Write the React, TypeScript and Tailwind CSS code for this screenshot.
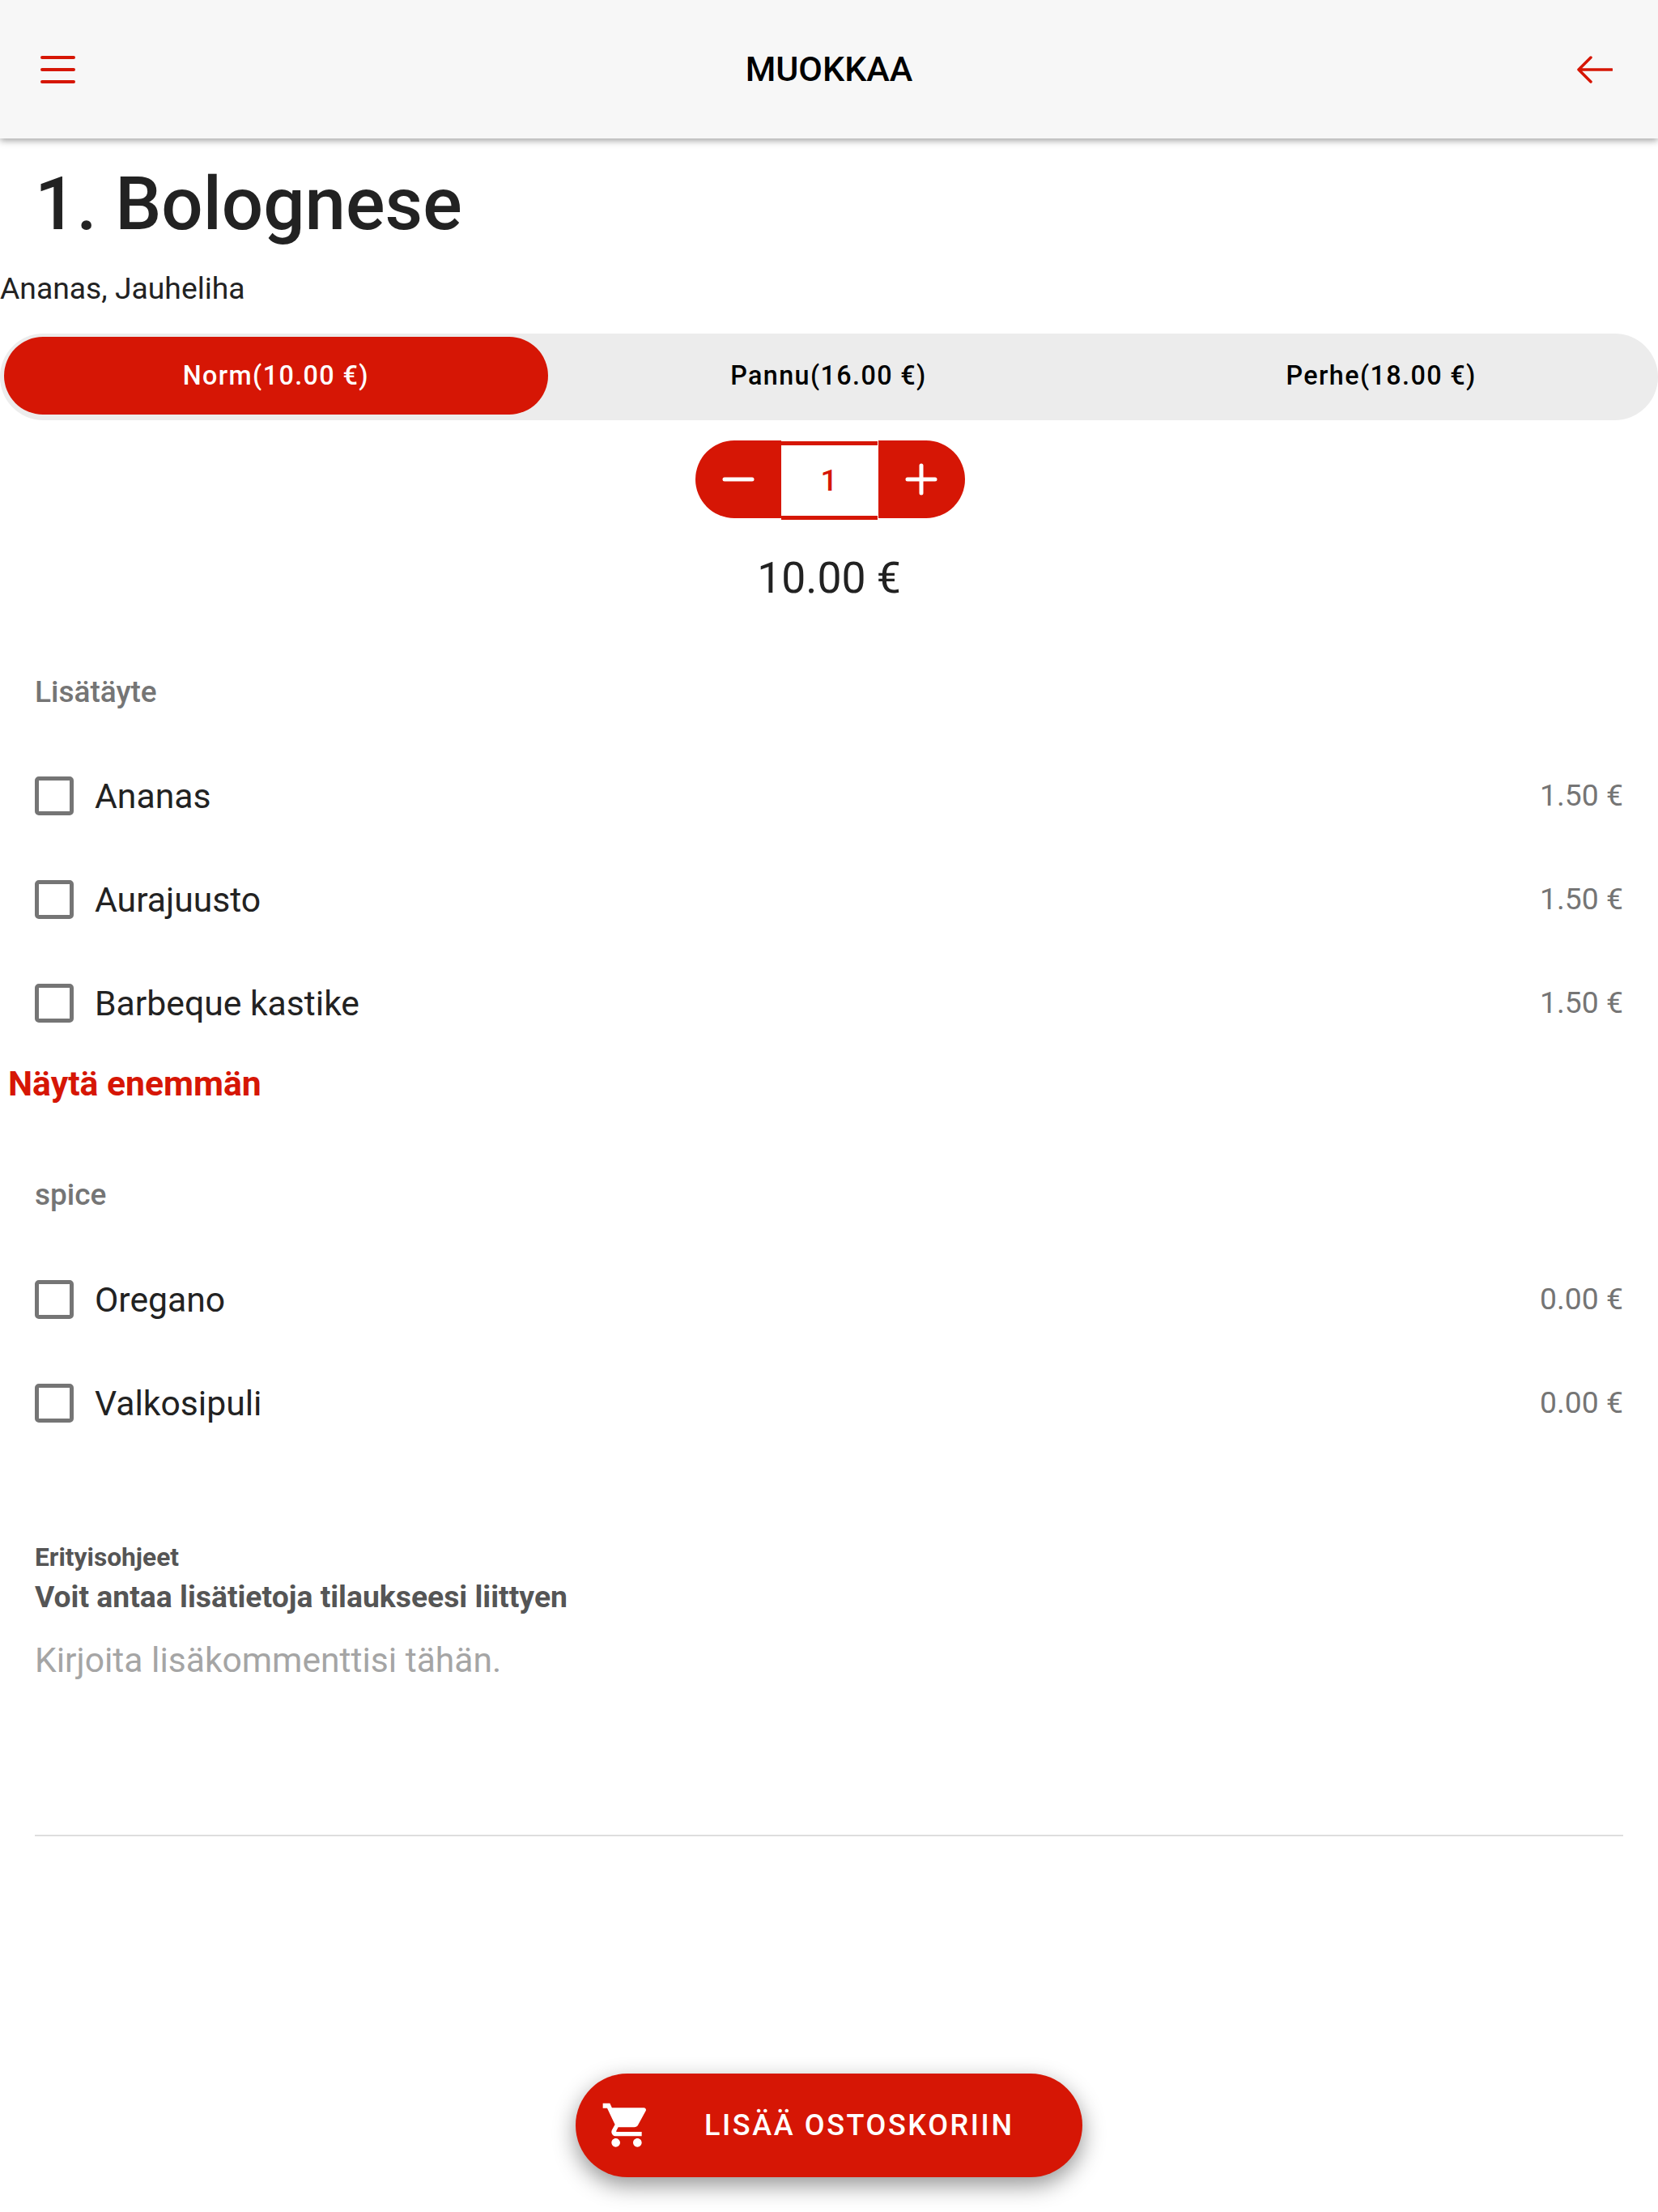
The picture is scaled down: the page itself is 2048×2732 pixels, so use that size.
const SIZES = [
  { label: 'Norm(10.00 €)', active: true },
  { label: 'Pannu(16.00 €)', active: false },
  { label: 'Perhe(18.00 €)', active: false },
]

const TOPPINGS = [
  { name: 'Ananas', price: '1.50 €' },
  { name: 'Aurajuusto', price: '1.50 €' },
  { name: 'Barbeque kastike', price: '1.50 €' },
]

const SPICES = [
  { name: 'Oregano', price: '0.00 €' },
  { name: 'Valkosipuli', price: '0.00 €' },
]

function OptionRow({ name, price }: { name: string; price: string }) {
  return (
    <div className="flex h-[128px] items-center justify-between px-[43px]">
      <div className="flex items-center">
        <span className="h-[48px] w-[48px] rounded-[5px] border-[5px] border-[#757575]" />
        <span className="ml-[26px] text-[42.7px] text-[#222222]">{name}</span>
      </div>
      <span className="text-[37.3px] text-[#757575]">{price}</span>
    </div>
  )
}

function SectionLabel({ children, className }: { children: string; className: string }) {
  return (
    <div className={`flex h-[50px] items-center px-[43px] text-[37px] font-medium text-[#757575] ${className}`}>
      {children}
    </div>
  )
}

export default function App() {
  return (
    <div className="relative h-[2732px] w-[2048px] overflow-hidden bg-white font-['Roboto',sans-serif]">
      {/* Toolbar */}
      <header className="relative z-10 flex h-[171px] items-center justify-between bg-[#f7f7f7] pl-[50px] pr-[56px] shadow-[0_3px_8px_rgba(0,0,0,0.35)]">
        <svg width="43" height="34" viewBox="0 0 43 34" fill="none" stroke="#d61605" strokeWidth="4" strokeLinecap="round">
          <path d="M2 2h39M2 17h39M2 32h39" />
        </svg>
        <h2 className="ml-[7px] text-[43px] font-medium text-black">MUOKKAA</h2>
        <svg width="44" height="34" viewBox="0 0 44 34" fill="none" stroke="#d61605" strokeWidth="3.5" strokeLinecap="round" strokeLinejoin="round">
          <path d="M43 17H3M17 2 2 17l15 15" />
        </svg>
      </header>

      <h1 className="flex h-[163px] items-center pl-[43px] text-[90.6px] font-medium text-[#222222]">1. Bolognese</h1>
      <p className="-mt-[2px] flex h-[50px] items-center text-[37.3px] text-[#222222]">Ananas, Jauheliha</p>

      {/* Size segment */}
      <div className="mt-[30px] grid h-[107px] grid-cols-3 rounded-[54px] bg-[#ececec]">
        {SIZES.map((size) => (
          <div
            key={size.label}
            className={`ml-[5px] mr-[6px] mt-[4px] flex h-[96px] items-center justify-center rounded-[48px] text-[32.3px] font-medium tracking-[1.4px] ${
              size.active ? 'bg-[#d61605] text-white' : 'text-black'
            }`}
          >
            {size.label}
          </div>
        ))}
      </div>

      {/* Quantity */}
      <div className="ml-[2px] mt-[25px] flex justify-center">
        <div className="flex h-[96px] w-[106px] items-center justify-center rounded-l-[48px] bg-[#d61605]">
          <svg width="40" height="6" viewBox="0 0 40 6" stroke="white" strokeWidth="5" strokeLinecap="round">
            <path d="M3 3h34" />
          </svg>
        </div>
        <div className="mt-[1px] flex h-[97px] w-[119px] items-center justify-center border-y-[5px] border-[#d61605] text-[37px] font-medium text-[#d61605]">
          1
        </div>
        <div className="ml-[1px] flex h-[96px] w-[107px] items-center justify-center rounded-r-[48px] bg-[#d61605]">
          <svg width="40" height="40" viewBox="0 0 40 40" stroke="white" strokeWidth="5" strokeLinecap="round">
            <path d="M3 20h34M20 3v34" />
          </svg>
        </div>
      </div>

      <div className="mt-[42px] flex h-[60px] items-center justify-center text-[53.5px] text-[#222222]">10.00 €</div>

      <SectionLabel className="mt-[86px]">Lisätäyte</SectionLabel>
      <div className="mt-[39px]">
        {TOPPINGS.map((item) => (
          <OptionRow key={item.name} {...item} />
        ))}
      </div>

      <div className="mt-[5px] flex h-[60px] items-center pl-[10px] text-[42.7px] font-bold text-[#d61605]">Näytä enemmän</div>

      <SectionLabel className="mt-[83px]">spice</SectionLabel>
      <div className="mt-[40px]">
        {SPICES.map((item) => (
          <OptionRow key={item.name} {...item} />
        ))}
      </div>

      {/* Special instructions */}
      <div className="mx-[43px] mt-[107px]">
        <div className="flex h-[40px] items-center text-[31.7px] font-bold text-[#555555]">Erityisohjeet</div>
        <div className="mt-[7px] flex h-[44px] items-center text-[37.3px] font-bold text-[#555555]">
          Voit antaa lisätietoja tilaukseesi liittyen
        </div>
        <div className="mt-[26px] h-[247px] border-b-2 border-[#dedede]">
          <div className="flex h-[60px] items-center text-[42.6px] text-[#a5a5a5]">Kirjoita lisäkommenttisi tähän.</div>
        </div>
      </div>

      {/* Floating add-to-cart button */}
      <button className="absolute left-[711px] top-[2561px] flex h-[128px] w-[626px] items-center rounded-[64px] bg-[#d61605] pl-[31px] text-white shadow-[0_10px_28px_rgba(0,0,0,0.42)]">
        <svg width="64" height="64" viewBox="0 0 24 24" fill="white">
          <path d="M7 18c-1.1 0-1.99.9-1.99 2S5.9 22 7 22s2-.9 2-2-.9-2-2-2zM1 2v2h2l3.6 7.59-1.35 2.45c-.16.28-.25.61-.25.96 0 1.1.9 2 2 2h12v-2H7.42c-.14 0-.25-.11-.25-.25l.03-.12.9-1.83h7.45c.75 0 1.41-.41 1.75-1.03l3.58-6.49c.08-.14.12-.31.12-.48 0-.55-.45-1-1-1H5.21l-.94-2H1zm16 16c-1.1 0-1.99.9-1.99 2s.89 2 1.99 2 2-.9 2-2-.9-2-2-2z" />
        </svg>
        <span className="ml-[64px] text-[36px] font-medium tracking-[2.6px]">LISÄÄ OSTOSKORIIN</span>
      </button>
    </div>
  )
}
